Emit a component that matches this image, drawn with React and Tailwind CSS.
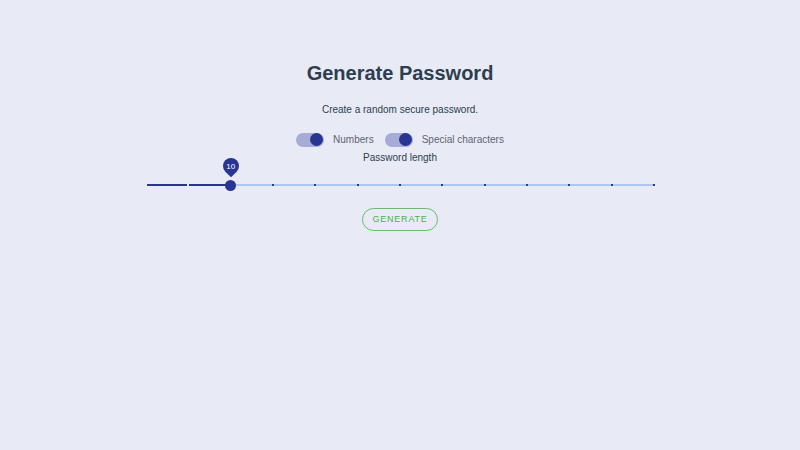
// App.jsx — Generador de contraseñas: título, opciones, slider de longitud y botón.
import { useState } from 'react'

const MIN = 8
const MAX = 20

function Toggle({ checked, onChange, label }) {
  return (
    <label className="flex items-center gap-[9px] cursor-pointer select-none">
      <span
        onClick={() => onChange(!checked)}
        className="relative flex items-center w-[28px] h-[14px] rounded-full bg-[#a6acd6]"
      >
        <span
          className={`absolute w-[13px] h-[13px] rounded-full bg-[#283593] ${checked ? 'left-[14px]' : 'left-0'}`}
        />
      </span>
      <span className="text-[#5f6473]">{label}</span>
    </label>
  )
}

function Slider({ value }) {
  const marks = Array.from({ length: MAX - MIN + 1 }, (_, i) => MIN + i)
  const pct = ((value - MIN) / (MAX - MIN)) * 100

  return (
    <div className="relative w-[508px] h-[10px] mt-[15px]">
      {/* rail */}
      <div className="absolute left-0 right-0 top-[4px] h-[2px] bg-[#aec7ef]" />
      {/* track activo */}
      <div className="absolute left-0 top-[4px] h-[2px] bg-[#283593]" style={{ width: pct + '%' }} />
      {/* marcas */}
      {marks.map(m => {
        const left = ((m - MIN) / (MAX - MIN)) * 100
        const active = m < value
        return (
          <span
            key={m}
            className={`absolute top-[4px] w-[2px] h-[2px] -ml-[1px] ${active ? 'bg-[#e8eaf6]' : 'bg-[#3a3f58]'}`}
            style={{ left: left + '%' }}
          />
        )
      })}
      {/* thumb + etiqueta */}
      <div className="absolute top-[5px]" style={{ left: pct + '%' }}>
        <span className="absolute -left-[5.5px] -top-[5.5px] w-[11px] h-[11px] rounded-full bg-[#283593]" />
        <span className="absolute -left-[8px] -top-[27px] w-[16px] h-[16px] rounded-[50%_50%_50%_0] -rotate-45 bg-[#283593]" />
        <span className="absolute -left-[8px] -top-[27px] w-[16px] h-[16px] flex items-center justify-center text-[8px] text-white">
          {value}
        </span>
      </div>
    </div>
  )
}

export default function App() {
  const [numbers, setNumbers] = useState(true)
  const [special, setSpecial] = useState(true)

  return (
    <div className="min-h-[450px] w-full bg-[#e8eaf6] flex flex-col items-center pt-[60px] text-[10px] leading-[15px] font-['Liberation_Sans',Arial,sans-serif] text-[#2c3e50]">
      <h1 className="text-[20px] leading-[26px] font-bold text-[#2c3e50]">Generate Password</h1>
      <p className="mt-[16px] text-[#2c3e50]">Create a random secure password.</p>

      <div className="flex items-center gap-[11px] mt-[15px]">
        <Toggle checked={numbers} onChange={setNumbers} label="Numbers" />
        <Toggle checked={special} onChange={setSpecial} label="Special characters" />
      </div>
      <p className="mt-[3px]">Password length</p>

      <Slider value={10} />

      <button className="mt-[18px] w-[76px] h-[23px] rounded-full border border-[#6cb96f] text-[#4caf50] text-[9px] tracking-[0.8px]">
        GENERATE
      </button>
    </div>
  )
}
